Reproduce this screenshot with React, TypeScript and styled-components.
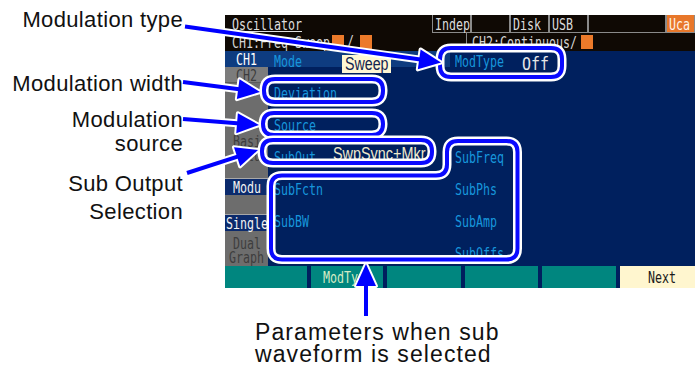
import { FC } from 'react'
import styled, { createGlobalStyle } from 'styled-components'

const GlobalStyle = createGlobalStyle`
   html, body {
      margin: 0;
      padding: 0;
      background: #ffffff;
   }

   body {
      font-family: 'Liberation Sans', Arial, sans-serif;
      overflow: hidden;
   }
`

// the instrument draws a tall, narrow fixed-pitch font: squeeze a mono face to that pitch
const Narrow: FC<{ text: string; size?: number; pitch?: number; line?: number }> = ({
   text,
   size = 16,
   pitch = 7,
   line = 16,
}) => (
   <NarrowBox style={{ width: text.length * pitch, height: line }}>
      <NarrowInk $size={size} $line={line} $scale={pitch / (size * 0.602)}>
         {text}
      </NarrowInk>
   </NarrowBox>
)

const sideItems = [
   { id: 'ch1', lines: ['CH1'], h: 16, tone: 'lit' },
   { id: 'ch2', lines: ['CH2'], h: 16, tone: 'tab' },
   { id: 'gap1', lines: [], h: 50, tone: 'plain' },
   { id: 'basic', lines: ['Basi', 'Setu'], h: 28, tone: 'plain' },
   { id: 'gap2', lines: [], h: 17, tone: 'plain' },
   { id: 'modu', lines: ['Modu'], h: 17, tone: 'sel' },
   { id: 'gap3', lines: [], h: 19, tone: 'plain' },
   { id: 'single', lines: ['Single'], h: 17, tone: 'sel' },
   { id: 'dual', lines: ['Dual', 'Graph'], h: 35, tone: 'plain' },
] as const

const leftParams = ['Deviation', 'Source']
const lowerLeft = ['SubFctn', 'SubBW']
const rightParams = ['SubFreq', 'SubPhs', 'SubAmp', 'SubOffs']
const softKeys = ['', 'ModType', '', '', '', 'Next']

// callout arrows: start, tip
const arrows = [
   [185, 26.5, 441, 62.5],
   [183, 82, 260, 92],
   [183, 119, 259, 125],
   [187, 173, 258, 150],
   [366, 316, 366, 264],
]

const rings = [
   'M451,48 H551 Q562,48 562,59 V66 Q562,77 551,77 H451 Q440,77 440,66 V59 Q440,48 451,48 Z',
   'M275,79 H372 Q383,79 383,90 V91 Q383,102 372,102 H275 Q264,102 264,91 V90 Q264,79 275,79 Z',
   'M274,113 H372 Q383,113 383,124 Q383,135 372,135 H274 Q263,135 263,124 Q263,113 274,113 Z',
   'M273,140 H421 Q432,140 432,151 V152 Q432,163 421,163 H273 Q262,163 262,152 V151 Q262,140 273,140 Z',
   'M271,186 Q271,175.5 282,175.5 H436 Q447,175.5 447,164.5 V152 Q447,141 458,141 H506.5 Q517.5,141 517.5,152 V248.5 Q517.5,259.5 506.5,259.5 H282 Q271,259.5 271,248.5 Z',
]

const arrowParts = (x1: number, y1: number, x2: number, y2: number) => {
   const len = 22
   const half = 10
   const d = Math.hypot(x2 - x1, y2 - y1)
   const ux = (x2 - x1) / d
   const uy = (y2 - y1) / d
   const bx = x2 - ux * len
   const by = y2 - uy * len

   return {
      line: { x1, y1, x2: bx + ux * 3, y2: by + uy * 3 },
      head: `${x2},${y2} ${bx - uy * half},${by + ux * half} ${bx + uy * half},${by - ux * half}`,
   }
}

const App: FC = () => {
   const parts = arrows.map(([x1, y1, x2, y2]) => arrowParts(x1, y1, x2, y2))

   return (
      <Page>
         <GlobalStyle />

         <Top>
            <Callouts>
               <Callout $gap={0}>Modulation type</Callout>
               <Callout $gap={40}>Modulation width</Callout>
               <Callout $gap={12}>
                  Modulation
                  <br />
                  source
               </Callout>
               <Callout $gap={14} $lh={28}>
                  Sub Output
                  <br />
                  Selection
               </Callout>
            </Callouts>

            <Screen>
               <TitleBar>
                  <TitleName>
                     <Underlined>
                        <Narrow text='Oscillator' line={15} />
                     </Underlined>
                  </TitleName>
                  <TitleKey>
                     <Narrow text='Indep' />
                  </TitleKey>
                  <TitleKey />
                  <TitleKey>
                     <Narrow text='Disk' />
                  </TitleKey>
                  <TitleKey>
                     <Narrow text='USB' />
                  </TitleKey>
                  <TitleKey />
                  <TitleKey $accent>
                     <Narrow text='Uca' />
                  </TitleKey>
               </TitleBar>

               <StatusBar>
                  <StatusCell>
                     <Narrow text='CH1:Freq Sweep' />
                     <Flag $gap={2} />
                     <Slash>
                        <Narrow text='/' />
                     </Slash>
                     <Flag $gap={6} />
                  </StatusCell>
                  <StatusCell $divider>
                     <Narrow text='CH2:Continuous/' />
                     <Flag $gap={4} />
                  </StatusCell>
               </StatusBar>

               <Body>
                  <SideMenu>
                     {sideItems.map(item => (
                        <SideItem key={item.id} $h={item.h} $tone={item.tone}>
                           {item.lines.map(line => (
                              <Narrow key={line} text={line} size={item.lines.length > 1 ? 15 : 16} line={item.lines.length > 1 ? 14 : 16} />
                           ))}
                        </SideItem>
                     ))}
                  </SideMenu>

                  <Params>
                     <ParamColumn>
                        <ParamRow $lit>
                           <ParamName $w={68}>
                              <Narrow text='Mode' />
                           </ParamName>
                           <Choice>
                              <Readout $scale={0.79}>Sweep</Readout>
                           </Choice>
                        </ParamRow>

                        {leftParams.map(name => (
                           <ParamRow key={name}>
                              <ParamName $w={68}>
                                 <Narrow text={name} />
                              </ParamName>
                           </ParamRow>
                        ))}

                        <ParamRow>
                           <ParamName $w={59}>
                              <Narrow text='SubOut' />
                           </ParamName>
                           <ValueSlot $offset={-2.5}>
                              <Readout $light $scale={0.8}>
                                 SwpSync+Mkr
                              </Readout>
                           </ValueSlot>
                        </ParamRow>

                        {lowerLeft.map(name => (
                           <ParamRow key={name}>
                              <ParamName $w={68}>
                                 <Narrow text={name} />
                              </ParamName>
                           </ParamRow>
                        ))}
                     </ParamColumn>

                     <ParamColumn $right>
                        <ParamRow>
                           <ParamName $w={67}>
                              <Narrow text='ModType' />
                           </ParamName>
                           <ValueSlot $offset={3.6}>
                              <OffText>
                                 <Narrow text='Off' size={18} pitch={9} line={18} />
                              </OffText>
                           </ValueSlot>
                        </ParamRow>
                        <ParamRow />
                        <ParamRow />
                        {rightParams.map(name => (
                           <ParamRow key={name}>
                              <ParamName $w={67}>
                                 <Narrow text={name} />
                              </ParamName>
                           </ParamRow>
                        ))}
                     </ParamColumn>
                  </Params>
               </Body>

               <SoftKeys>
                  {softKeys.map((label, i) => (
                     <SoftKey key={i} $lit={label === 'Next'}>
                        {label && <Narrow text={label} />}
                     </SoftKey>
                  ))}
               </SoftKeys>
            </Screen>
         </Top>

         <Caption>
            Parameters when sub
            <br />
            waveform is selected
         </Caption>

         <Overlay width='695' height='369' viewBox='0 0 695 369'>
            {rings.map(d => (
               <g key={d} fill='none'>
                  <path d={d} stroke='#ffffff' strokeWidth='9' />
                  <path d={d} stroke='#0a0aff' strokeWidth='4' />
               </g>
            ))}

            {parts.map(({ line, head }, i) => (
               <g key={'w' + i}>
                  <line {...line} stroke='#ffffff' strokeWidth='8' />
                  <polygon points={head} fill='#ffffff' stroke='#ffffff' strokeWidth='4' strokeLinejoin='round' />
               </g>
            ))}

            {parts.map(({ line, head }, i) => (
               <g key={'b' + i}>
                  <line {...line} stroke='#0000ff' strokeWidth='4' />
                  <polygon points={head} fill='#0000ff' />
               </g>
            ))}
         </Overlay>
      </Page>
   )
}

export default App

const NarrowBox = styled.span`
   display: inline-block;
   white-space: nowrap;
   overflow: visible;
`

const NarrowInk = styled.span<{ $size: number; $line: number; $scale: number }>`
   display: inline-block;
   font-family: 'DejaVu Sans Mono', monospace;
   font-size: ${p => p.$size}px;
   line-height: ${p => p.$line}px;
   transform: scaleX(${p => p.$scale});
   transform-origin: left center;
`

const Page = styled.div`
   position: relative;
   width: 695px;
   height: 369px;
   overflow: hidden;
   background: #ffffff;
`

const Top = styled.div`
   display: flex;
   align-items: flex-start;
`

const Callouts = styled.div`
   box-sizing: border-box;
   display: flex;
   flex-direction: column;
   align-items: flex-end;
   flex-shrink: 0;
   padding: 8px 42px 0 0;
   width: 225px;
`

const Callout = styled.div<{ $gap: number; $lh?: number }>`
   color: #111111;
   font-size: 22px;
   letter-spacing: 0.35px;
   line-height: ${p => p.$lh ?? 24}px;
   margin-top: ${p => p.$gap}px;
   text-align: right;
   white-space: nowrap;
`

const Screen = styled.div`
   background: #00205e;
   display: flex;
   flex-direction: column;
   flex-shrink: 0;
   height: 273px;
   margin-top: 15px;
   overflow: hidden;
   width: 470px;
`

const TitleBar = styled.div`
   background: #0f0904;
   color: #dedede;
   display: grid;
   grid-template-columns: 207px 39px 39px 39px 39px 78px 29px;
   height: 18px;
`

const TitleName = styled.div`
   align-items: center;
   display: flex;
   padding-left: 7px;
`

const Underlined = styled.span`
   border-bottom: 1px solid #dedede;
   display: inline-flex;
`

const TitleKey = styled.div<{ $accent?: boolean }>`
   align-items: center;
   background: ${p => (p.$accent ? '#e8772a' : 'transparent')};
   border: 1px solid #8a8a8a;
   border-top: none;
   box-sizing: border-box;
   color: ${p => (p.$accent ? '#fff4e8' : '#dcdcdc')};
   display: flex;
   padding-left: 2px;
`

const StatusBar = styled.div`
   background: #0f0904;
   color: #d4d4d4;
   display: grid;
   grid-template-columns: 241px 229px;
   height: 18px;
`

const StatusCell = styled.div<{ $divider?: boolean }>`
   align-items: center;
   border-left: ${p => (p.$divider ? '1px solid #8a8a8a' : 'none')};
   display: flex;
   padding-left: ${p => (p.$divider ? 5 : 7)}px;
`

const Flag = styled.span<{ $gap: number }>`
   background: #ec7a2a;
   height: 14px;
   margin-left: ${p => p.$gap}px;
   width: 12px;
`

const Slash = styled.span`
   margin-left: 3px;
`

const Body = styled.div`
   display: grid;
   grid-template-columns: 43px 427px;
   height: 215px;
`

const SideMenu = styled.div`
   background: #6d6d6d;
   display: flex;
   flex-direction: column;
`

const sideTones = {
   lit: 'background: #0e3c80; color: #ffffff;',
   tab: 'background: #7c7c7c; color: #3c3c3c; border-bottom: 1px solid #5c5c5c;',
   sel: 'background: #0b2a6c; color: #f2f2f2; border-top: 1px solid #a8a8a8;',
   plain: 'color: #3e3e3e;',
}

const SideItem = styled.div<{ $h: number; $tone: keyof typeof sideTones }>`
   align-items: center;
   box-sizing: border-box;
   display: flex;
   flex-direction: column;
   height: ${p => p.$h}px;
   justify-content: center;
   ${p => sideTones[p.$tone]}
`

const Params = styled.div`
   display: grid;
   grid-template-columns: 182px 245px;
`

const ParamColumn = styled.div<{ $right?: boolean }>`
   display: flex;
   flex-direction: column;
   gap: 16px;
   padding-left: ${p => (p.$right ? 5 : 6)}px;
`

const ParamRow = styled.div<{ $lit?: boolean }>`
   align-items: flex-start;
   background: ${p => (p.$lit ? '#0e3c80' : 'transparent')};
   display: flex;
   height: 16px;
   margin-left: -6px;
   padding-left: 6px;
`

const ParamName = styled.div<{ $w: number }>`
   color: #1796dc;
   flex-shrink: 0;
   padding-top: 2px;
   width: ${p => p.$w}px;
`

const Choice = styled.div`
   background: #fff7d3;
   box-sizing: border-box;
   height: 18px;
   margin-top: 3.5px;
   overflow: hidden;
   padding-left: 3px;
   width: 49px;
`

const ValueSlot = styled.div<{ $offset: number }>`
   margin-top: ${p => p.$offset}px;
`

const Readout = styled.span<{ $light?: boolean; $scale: number }>`
   color: ${p => (p.$light ? '#efe9cc' : '#13244f')};
   display: inline-block;
   font-family: 'Liberation Sans', Arial, sans-serif;
   font-size: 18px;
   line-height: 18px;
   transform: scaleX(${p => p.$scale});
   transform-origin: left center;
   white-space: nowrap;
`

const OffText = styled.div`
   color: #e6e6e6;
   line-height: 18px;
`

const SoftKeys = styled.div`
   background: #001f5e;
   display: grid;
   gap: 4px;
   grid-template-columns: 82px 72px 74px 73px 74px 84px;
   height: 22px;
`

const SoftKey = styled.div<{ $lit?: boolean }>`
   align-items: center;
   background: ${p => (p.$lit ? '#fff6cf' : '#00867f')};
   color: ${p => (p.$lit ? '#1a1a1a' : '#d4ebc4')};
   display: flex;
   justify-content: center;
`

const Caption = styled.div`
   color: #111111;
   font-size: 23px;
   letter-spacing: 1.1px;
   line-height: 22px;
   margin: 33px 0 0 255px;
   white-space: nowrap;
`

const Overlay = styled.svg`
   left: 0;
   pointer-events: none;
   position: absolute;
   top: 0;
`
